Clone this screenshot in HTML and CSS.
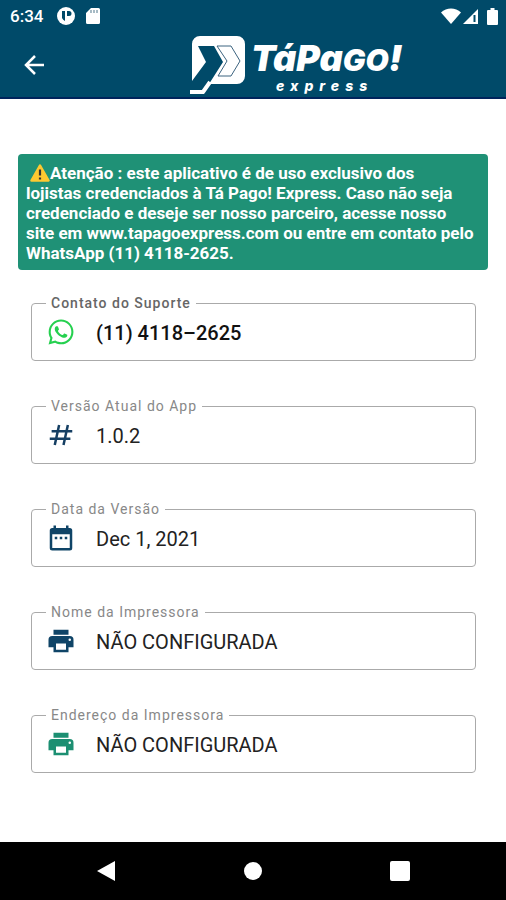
FILE: index.html
```html
<!DOCTYPE html>
<html lang="pt-BR">
<head>
  <meta charset="UTF-8">
  <meta name="viewport" content="width=device-width, initial-scale=1">
  <title>Tá Pago! Express</title>
  <link rel="stylesheet" href="styles.css">
</head>
<body>

  <header class="header">
    <div class="status-bar">
      <span class="time">6:34</span>
      <svg width="18" height="18" viewBox="0 0 18 18">
        <circle cx="9" cy="9" r="9" fill="#fff"/>
        <path d="M5 4h3v10a6 6 0 0 1-3-3zM10 4h2a2 2 0 0 1 0 5h-2z" fill="#004a69"/>
      </svg>
      <svg width="14" height="16" viewBox="0 0 14 16">
        <path d="M5 0h7.500a1.500 1.500 0 0 1 1.500 1.500v13a1.500 1.500 0 0 1-1.500 1.500h-11a1.500 1.500 0 0 1-1.500-1.500V5z" fill="#fff"/>
        <path d="M5 2v3M8 2v3M11 2v3" stroke="#8aa5b3" stroke-width="1.500"/>
      </svg>
      <div class="signals">
        <svg width="20" height="16" viewBox="0 0 20 16">
          <path d="M10 16L0 4.500C5.500-1 14.500-1 20 4.500z" fill="#fff"/>
        </svg>
        <svg width="17" height="17" viewBox="0 0 17 17">
          <path d="M16 1v15H1z" fill="#fff"/>
          <path d="M12.500 7v7" stroke="#004a69" stroke-width="2"/>
        </svg>
        <svg class="battery" width="11" height="17" viewBox="0 0 11 17">
          <path d="M3.500 0h4v2H10a1 1 0 0 1 1 1v13a1 1 0 0 1-1 1H1a1 1 0 0 1-1-1V3a1 1 0 0 1 1-1h2.500z" fill="#fff"/>
        </svg>
      </div>
    </div>

    <div class="app-bar">
      <button class="back" aria-label="Voltar">
        <svg width="20" height="20" viewBox="0 0 20 20" fill="none" stroke="#fff" stroke-width="2.500">
          <path d="M20 10H2M11 1L2 10l9 9"/>
        </svg>
      </button>
      <div class="logo">
        <svg width="57" height="60" viewBox="0 0 57 60">
          <path d="M11 1H48a8 8 0 0 1 8 8V41a8 8 0 0 1-8 8H20L34 27L25 11H9L17 27L3 46V9A8 8 0 0 1 11 1z" fill="#fff"/>
          <path d="M1 57H14L21 47" fill="none" stroke="#fff" stroke-width="4" stroke-linejoin="round"/>
          <path d="M28 11H42L51 26L42 41H29L38 26z" fill="#fff" stroke="#3d6480" stroke-width="1"/>
        </svg>
        <div class="logo-text">
          <div class="logo-name">TáPa<span class="logo-small">GO</span>!</div>
          <div class="logo-sub">express</div>
        </div>
      </div>
    </div>
  </header>

  <main class="content">
    <p class="notice">
      <svg class="warning" width="20" height="18" viewBox="0 0 20 18">
        <path d="M10 1.500L18.500 16.500h-17z" fill="#fdc931" stroke="#fdc931" stroke-width="2.500" stroke-linejoin="round"/>
        <path d="M10 5.500v6M10 13.500v2" stroke="#333" stroke-width="2.200"/>
      </svg>Atenção : este aplicativo é de uso exclusivo dos<br>
      lojistas credenciados à Tá Pago! Express. Caso não seja credenciado e deseje ser nosso parceiro, acesse nosso<br>
      site em www.tapagoexpress.com ou entre em contato pelo WhatsApp (11) 4118-2625.
    </p>

    <form class="fields">
      <fieldset class="field field-bold">
        <legend><label for="suporte">Contato do Suporte</label></legend>
        <div class="row">
          <svg class="icon" viewBox="0 0 24 24" fill="#25d04f">
            <path d="M12.040 2C6.580 2 2.130 6.450 2.130 11.910C2.130 13.660 2.590 15.360 3.450 16.860L2.050 22L7.300 20.620C8.750 21.410 10.380 21.830 12.040 21.830C17.500 21.830 21.950 17.380 21.950 11.920C21.950 9.270 20.920 6.780 19.050 4.910C17.180 3.030 14.690 2 12.040 2M12.050 3.670C14.250 3.670 16.310 4.530 17.870 6.090C19.420 7.650 20.280 9.720 20.280 11.920C20.280 16.460 16.580 20.150 12.040 20.150C10.560 20.150 9.110 19.760 7.850 19L7.550 18.830L4.430 19.650L5.260 16.610L5.060 16.290C4.240 15 3.800 13.470 3.800 11.910C3.810 7.370 7.500 3.670 12.050 3.670M8.530 7.330C8.370 7.330 8.100 7.390 7.870 7.640C7.650 7.890 7 8.500 7 9.710C7 10.930 7.890 12.100 8 12.270C8.140 12.440 9.760 14.940 12.250 16C12.840 16.270 13.300 16.420 13.660 16.530C14.250 16.720 14.790 16.690 15.220 16.630C15.700 16.560 16.680 16.030 16.890 15.450C17.100 14.870 17.100 14.380 17.040 14.270C16.970 14.170 16.810 14.110 16.560 14C16.310 13.860 15.090 13.260 14.870 13.180C14.640 13.100 14.500 13.060 14.310 13.300C14.150 13.550 13.670 14.110 13.530 14.270C13.380 14.440 13.240 14.460 13 14.340C12.740 14.210 11.940 13.950 11 13.110C10.260 12.450 9.770 11.640 9.620 11.390C9.500 11.150 9.610 11 9.730 10.890C9.840 10.780 10 10.600 10.100 10.450C10.230 10.310 10.270 10.200 10.350 10.040C10.430 9.870 10.390 9.730 10.330 9.610C10.270 9.500 9.770 8.260 9.560 7.770C9.360 7.290 9.160 7.350 9 7.340Z"/>
          </svg>
          <input type="text" id="suporte" value="(11) 4118–2625" readonly>
        </div>
      </fieldset>

      <fieldset class="field">
        <legend><label for="versao">Versão Atual do App</label></legend>
        <div class="row">
          <svg class="icon" viewBox="0 0 24 24" fill="none" stroke="#153f63" stroke-width="2">
            <path d="M10.500 4L7 20M17.500 4L14 20M4.500 9H21M3 15h16.500"/>
          </svg>
          <input type="text" id="versao" value="1.0.2" readonly>
        </div>
      </fieldset>

      <fieldset class="field">
        <legend><label for="data">Data da Versão</label></legend>
        <div class="row">
          <svg class="icon" viewBox="0 0 24 24" fill="#0f4467">
            <path d="M19 4h-1V2h-2v2H8V2H6v2H5a2 2 0 0 0-2 2v14a2 2 0 0 0 2 2h14a2 2 0 0 0 2-2V6a2 2 0 0 0-2-2zm0 16H5V9h14zM9 11H7v2h2zm4 0h-2v2h2zm4 0h-2v2h2z"/>
          </svg>
          <input type="text" id="data" value="Dec 1, 2021" readonly>
        </div>
      </fieldset>

      <fieldset class="field">
        <legend><label for="nome">Nome da Impressora</label></legend>
        <div class="row">
          <svg class="icon" viewBox="0 0 24 24" fill="#0f4467">
            <path d="M19 8H5a3 3 0 0 0-3 3v6h4v4h12v-4h4v-6a3 3 0 0 0-3-3zm-3 11H8v-5h8zm3-7a1 1 0 1 1 0-2 1 1 0 0 1 0 2zM18 3H6v4h12z"/>
          </svg>
          <input type="text" id="nome" value="NÃO CONFIGURADA" readonly>
        </div>
      </fieldset>

      <fieldset class="field">
        <legend><label for="endereco">Endereço da Impressora</label></legend>
        <div class="row">
          <svg class="icon" viewBox="0 0 24 24" fill="#1c8f72">
            <path d="M19 8H5a3 3 0 0 0-3 3v6h4v4h12v-4h4v-6a3 3 0 0 0-3-3zm-3 11H8v-5h8zm3-7a1 1 0 1 1 0-2 1 1 0 0 1 0 2zM18 3H6v4h12z"/>
          </svg>
          <input type="text" id="endereco" value="NÃO CONFIGURADA" readonly>
        </div>
      </fieldset>
    </form>
  </main>

  <nav class="nav-bar">
    <button aria-label="Voltar">
      <svg width="20" height="22" viewBox="0 0 20 22"><path d="M19 1v20L1 11z" fill="#fff"/></svg>
    </button>
    <button aria-label="Início">
      <svg width="20" height="20" viewBox="0 0 20 20"><circle cx="10" cy="10" r="9" fill="#fff"/></svg>
    </button>
    <button aria-label="Recentes">
      <svg width="20" height="20" viewBox="0 0 20 20"><rect width="20" height="20" rx="2" fill="#fff"/></svg>
    </button>
  </nav>

</body>
</html>
```
FILE: styles.css
```css
* {
  box-sizing: border-box;
}
body {
  margin: 0;
  min-height: 100vh;
  display: flex;
  flex-direction: column;
  font-family: Roboto, sans-serif;
  background: #fff;
  color: #222;
}
svg {
  display: block;
  flex: none;
}
button {
  border: none;
  background: none;
  padding: 0;
  cursor: pointer;
}

/* header */
.header {
  background: #004a69;
  border-bottom: 2px solid #00245c;
}
.status-bar {
  display: flex;
  align-items: center;
  height: 32px;
  padding: 0 8px 0 10px;
  color: #fff;
}
.time {
  font-size: 17px;
  font-weight: 500;
  margin-right: 14px;
}
.status-bar > svg {
  margin-right: 11px;
}
.signals {
  display: flex;
  align-items: center;
  margin-left: auto;
  gap: 1px;
}
.battery {
  margin-left: 7px;
}
.app-bar {
  display: grid;
  grid-template-columns: 189px 1fr;
  align-items: center;
  height: 65px;
}
.back {
  justify-self: start;
  margin-left: 24px;
}
.logo {
  display: flex;
  align-items: center;
  gap: 5px;
  color: #fff;
  font-family: Inter, sans-serif;
  font-style: italic;
}
.logo-text {
  padding-top: 2px;
}
.logo-name {
  font-size: 36px;
  line-height: 38px;
  font-weight: 900;
  font-feature-settings: "cv11";
}
.logo-small {
  font-size: 30px;
}
.logo-sub {
  padding-left: 25px;
  font-size: 14px;
  line-height: 14px;
  font-weight: 800;
  letter-spacing: 6px;
}

/* content */
.content {
  flex: 1;
  padding: 55px 18px 24px;
}
.notice {
  margin: 0;
  padding: 9px 8px 7px;
  border-radius: 4px;
  background: #1f9176;
  color: #fff;
  font-size: 17px;
  line-height: 20px;
  font-weight: 700;
}
.warning {
  display: inline-block;
  margin-left: 4px;
  vertical-align: -3px;
}
.fields {
  display: flex;
  flex-direction: column;
  gap: 37px;
  margin: 25px 12px 0 13px;
}
.field {
  min-width: 0;
  margin: 0;
  padding: 0 14px 7px;
  border: 1px solid #aaa;
  border-radius: 4px;
}
.field legend {
  padding: 0 5px;
  font-size: 14px;
  line-height: 16px;
  color: #888;
  letter-spacing: 1px;
}
.row {
  display: flex;
  align-items: center;
  gap: 20px;
  height: 42px;
}
.icon {
  width: 30px;
  height: 30px;
}
.row input {
  flex: 1;
  min-width: 0;
  border: none;
  outline: none;
  padding: 2px 0 0;
  background: none;
  font-family: inherit;
  font-size: 20px;
  color: #222;
}
.field-bold legend {
  font-weight: 500;
  color: #666;
}
.field-bold input {
  font-weight: 500;
  color: #111;
}

/* bottom navigation */
.nav-bar {
  display: flex;
  justify-content: space-around;
  align-items: center;
  height: 58px;
  padding: 0 33px;
  background: #000;
}
```
